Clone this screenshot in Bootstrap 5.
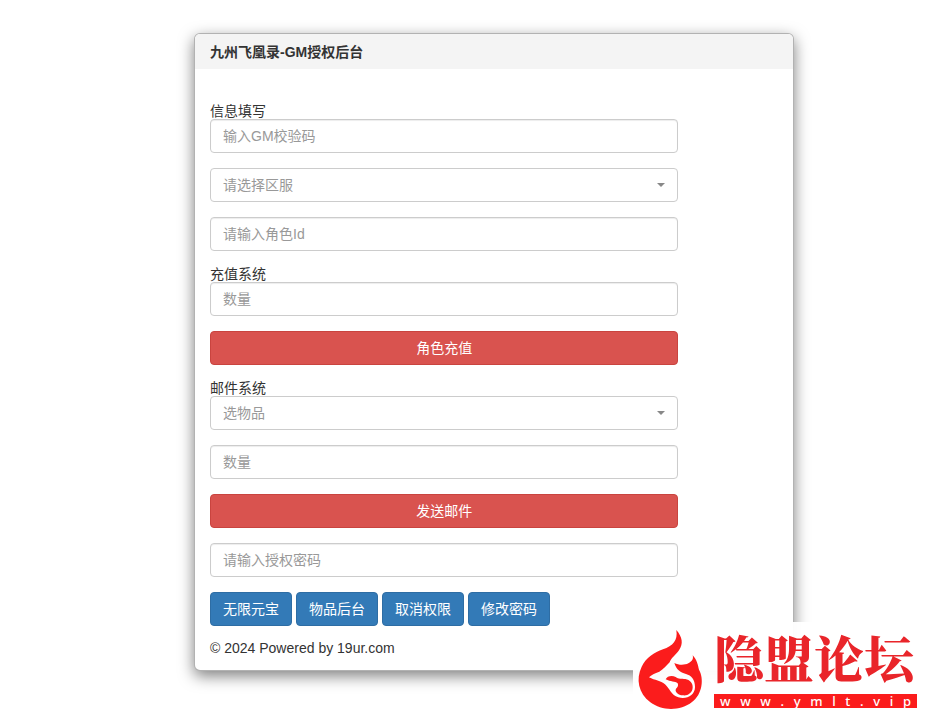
<!DOCTYPE html>
<html lang="zh-CN">
<head>
<meta charset="utf-8">
<meta name="viewport" content="width=device-width, initial-scale=1">
<title>九州飞凰录-GM授权后台</title>
<link href="https://cdn.jsdelivr.net/npm/bootstrap@5.3.0/dist/css/bootstrap.min.css" rel="stylesheet">
<style>
body {
  font-family: "Liberation Sans", "Noto Sans CJK SC", sans-serif;
  font-size: 14px;
  line-height: 20px;
  color: #333;
  min-height: 100vh;
}
.page-grid {
  display: grid;
  grid-template-columns: minmax(0, 194fr) minmax(0, 600px) minmax(0, 143fr);
  padding-top: 33px;
}
.gm-panel {
  grid-column: 2;
  border: 1px solid rgba(0, 0, 0, .3);
  border-radius: 6px;
  box-shadow: 0 5px 15px rgba(0, 0, 0, .5);
}
.gm-panel .card-header {
  background: #f4f4f4;
  border: 0;
  border-radius: 5px 5px 0 0;
  padding: 8px 15px 7px;
}
.gm-panel h1 { font-size: 14px; line-height: 20px; font-weight: 700; }
.gm-panel .card-body { padding: 34px 15px 12px; }
.gm-form { --bs-gutter-x: 30px; }
.stack { display: flex; flex-direction: column; gap: 15px; }
.section-label { display: block; line-height: 16px; }
.gm-panel .form-control, .gm-panel .form-select {
  height: 34px;
  padding: 6px 12px;
  font-size: 14px;
  line-height: 20px;
  color: #999;
  border: 1px solid #ccc;
  border-radius: 4px;
  box-shadow: inset 0 1px 1px rgba(0, 0, 0, .075);
}
.gm-panel .form-control::placeholder { color: #999; opacity: 1; }
.gm-panel .form-select {
  box-shadow: none;
  background-image: url("data:image/svg+xml,%3Csvg xmlns='http://www.w3.org/2000/svg' viewBox='0 0 8 4'%3E%3Cpath fill='%23888' d='M0 0h8L4 4z'/%3E%3C/svg%3E");
  background-size: 8px 4px;
  background-position: right 12px center;
}
.gm-panel .btn {
  height: 34px;
  padding: 6px 12px;
  font-size: 14px;
  line-height: 20px;
  border-radius: 4px;
}
.gm-panel .btn-danger { background: #d9534f; border-color: #c9443f; }
.gm-panel .btn-primary { background: #337ab7; border-color: #2e6da4; }
.tools { gap: 4px; }
.credit { margin-top: 12px; }
.watermark {
  right: 0;
  bottom: 0;
  width: 304px;
  height: 95px;
  background: rgba(255, 255, 255, .96);
  color: #fb1c1c;
}
.flame { width: 80px; height: 95px; margin-left: -3px; flex: none; }
.forum { width: 203px; margin-left: 4px; padding-top: 9px; }
.forum-name {
  font: 900 50px/50px "Noto Serif CJK SC", "Noto Sans CJK SC", sans-serif;
  color: #e9252a;
  white-space: nowrap;
}
.forum-url {
  display: flex;
  justify-content: space-between;
  margin-top: 13px;
  padding: 0 6px;
  background: #fb1c1c;
  color: #fff;
  font: 500 13px/14px "Noto Sans", sans-serif;
}
</style>
<script src="https://cdn.jsdelivr.net/npm/bootstrap@5.3.0/dist/js/bootstrap.bundle.min.js"></script>
</head>
<body class="position-relative bg-white">
<main class="page-grid">
  <section class="card gm-panel">
    <header class="card-header"><h1 class="m-0">九州飞凰录-GM授权后台</h1></header>
    <div class="card-body">
      <form class="row gm-form">
        <div class="col-10 stack">
          <div>
            <label class="section-label" for="code">信息填写</label>
            <input class="form-control" id="code" type="text" placeholder="输入GM校验码">
          </div>
          <select class="form-select" aria-label="请选择区服"><option>请选择区服</option></select>
          <input class="form-control" type="text" aria-label="角色Id" placeholder="请输入角色Id">
          <div>
            <label class="section-label" for="amount">充值系统</label>
            <input class="form-control" id="amount" type="text" placeholder="数量">
          </div>
          <button class="btn btn-danger w-100" type="button">角色充值</button>
          <div>
            <label class="section-label" for="item">邮件系统</label>
            <select class="form-select" id="item"><option>选物品</option></select>
          </div>
          <input class="form-control" type="text" aria-label="物品数量" placeholder="数量">
          <button class="btn btn-danger w-100" type="button">发送邮件</button>
          <input class="form-control" type="password" aria-label="授权密码" placeholder="请输入授权密码">
          <div class="d-flex flex-wrap tools">
            <button class="btn btn-primary" type="button">无限元宝</button>
            <button class="btn btn-primary" type="button">物品后台</button>
            <button class="btn btn-primary" type="button">取消权限</button>
            <button class="btn btn-primary" type="button">修改密码</button>
          </div>
        </div>
      </form>
      <footer class="credit">© 2024 Powered by 19ur.com</footer>
    </div>
  </section>
</main>
<aside class="watermark position-absolute d-flex">
  <svg class="flame" viewBox="-15 -9 240 285" aria-hidden="true">
    <path fill="#fb1c1c" d="M124 15C142 36 146 56 132 76C122 90 108 99 104 112C94 122 86 133 73 140C59 146 49 149 42 157C60 167 77 166 90 178C104 190 108 211 130 217C155 224 180 211 180 186C180 164 169 151 153 147C135 142 124 134 118 114C131 121 149 121 160 115C172 109 176 101 173 91C186 104 189 121 192 134C207 160 203 207 171 231C136 259 80 258 46 232C10 204 2 162 20 125C33 98 58 82 84 73C114 62 129 47 124 15Z"/>
    <path fill="#fb1c1c" d="M92 163C96 153 111 150 122 156C131 163 139 161 151 162C165 164 174 175 173 188C172 203 158 213 144 211C129 210 118 200 123 191C128 187 131 181 128 175C120 168 107 171 92 163Z"/>
  </svg>
  <div class="forum">
    <div class="forum-name">隐盟论坛</div>
    <div class="forum-url"><span>w</span><span>w</span><span>w</span><span>.</span><span>y</span><span>m</span><span>l</span><span>t</span><span>.</span><span>v</span><span>i</span><span>p</span></div>
  </div>
</aside>
</body>
</html>
